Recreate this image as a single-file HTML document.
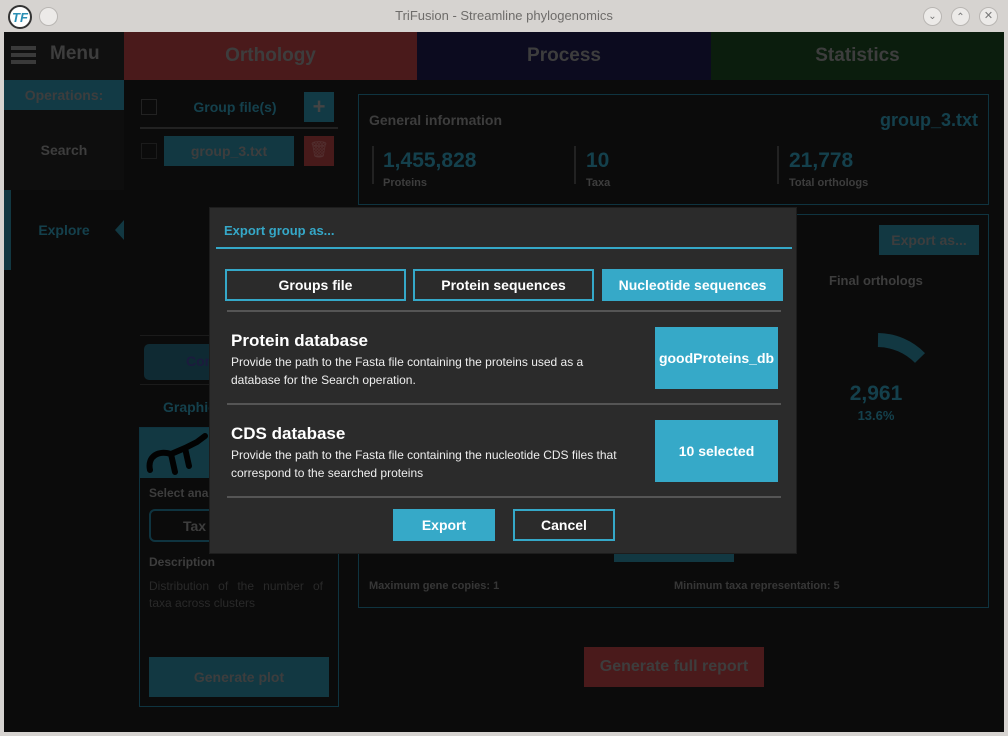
<!DOCTYPE html>
<html><head><meta charset="utf-8"><style>
*{box-sizing:border-box;margin:0;padding:0}
body{width:1008px;height:736px;overflow:hidden;background:#d6d3d0;font-family:"Liberation Sans",sans-serif;position:relative}
.a{position:absolute}
.t{color:#999;font-weight:bold}
.dt{color:#33a0bd;font-weight:bold}
.btn{position:absolute;border:2px solid #35a8c8;color:#fff;font-weight:bold;font-size:14px;display:flex;align-items:center;justify-content:center;background:#2b2b2b}
.fill{background:#36a9c8;border:none}
</style></head><body>
<!-- title bar -->
<div class="a" style="left:8px;top:5px;width:24px;height:24px;border-radius:50%;background:#fff;border:2px solid #333;font:bold italic 13px 'Liberation Sans';color:#2a8fb5;display:flex;align-items:center;justify-content:center">TF</div>
<div class="a" style="left:39px;top:7px;width:19px;height:19px;border-radius:50%;background:#eceae8;border:1px solid #b9b6b3"></div>
<div class="a" style="left:0;top:8px;width:1008px;text-align:center;font-size:13px;color:#6e6c6a">TriFusion - Streamline phylogenomics</div>
<div class="a" style="left:923px;top:7px;width:19px;height:19px;border-radius:50%;background:#eceae8;border:1px solid #b9b6b3;font-size:10px;color:#777;text-align:center;line-height:17px">&#8964;</div>
<div class="a" style="left:951px;top:7px;width:19px;height:19px;border-radius:50%;background:#eceae8;border:1px solid #b9b6b3;font-size:10px;color:#777;text-align:center;line-height:20px">&#8963;</div>
<div class="a" style="left:979px;top:7px;width:19px;height:19px;border-radius:50%;background:#eceae8;border:1px solid #b9b6b3;font-size:11px;color:#777;text-align:center;line-height:17px">&#10005;</div>
<!-- app -->
<div class="a" style="left:4px;top:32px;width:1000px;height:700px;background:#1c1c1c"></div>
<div class="a" style="left:4px;top:32px;width:120px;height:48px;background:#282828"></div>
<div class="a" style="left:11px;top:46px;width:25px;height:4px;background:#929292;box-shadow:0 7px 0 #929292,0 14px 0 #929292"></div>
<div class="a t" style="left:50px;top:43px;font-size:19px">Menu</div>
<div class="a" style="left:124px;top:32px;width:293px;height:48px;background:#b94144"></div>
<div class="a t" style="left:124px;top:45px;width:293px;text-align:center;font-size:19px">Orthology</div>
<div class="a" style="left:417px;top:32px;width:294px;height:48px;background:#1e1c4e"></div>
<div class="a t" style="left:417px;top:45px;width:294px;text-align:center;font-size:19px">Process</div>
<div class="a" style="left:711px;top:32px;width:293px;height:48px;background:#1c4a21"></div>
<div class="a t" style="left:711px;top:45px;width:293px;text-align:center;font-size:19px">Statistics</div>
<div class="a" style="left:4px;top:80px;width:120px;height:30px;background:#2f91ad"></div>
<div class="a t" style="left:4px;top:87px;width:120px;text-align:center;font-size:14px">Operations:</div>
<div class="a" style="left:4px;top:110px;width:120px;height:80px;background:#232323"></div>
<div class="a t" style="left:4px;top:142px;width:120px;text-align:center;font-size:14px">Search</div>
<div class="a" style="left:4px;top:190px;width:7px;height:80px;background:#2e8ca6"></div>
<div class="a dt" style="left:4px;top:222px;width:120px;text-align:center;font-size:14px">Explore</div>
<div class="a" style="left:115px;top:220px;border-right:9px solid #2e8ca6;border-top:10px solid transparent;border-bottom:10px solid transparent"></div>
<!-- left column -->
<div class="a" style="left:141px;top:99px;width:16px;height:16px;border:1px solid #555"></div>
<div class="a dt" style="left:180px;top:99px;width:110px;text-align:center;font-size:14px">Group file(s)</div>
<div class="a" style="left:304px;top:92px;width:30px;height:30px;background:#2f91ad;color:#aaa;font:bold 22px 'Liberation Sans';text-align:center;line-height:29px">+</div>
<div class="a" style="left:140px;top:127px;width:198px;height:2px;background:#555"></div>
<div class="a" style="left:141px;top:143px;width:16px;height:16px;border:1px solid #444"></div>
<div class="a" style="left:164px;top:136px;width:130px;height:30px;background:#2e8ca6;color:#999;font-weight:bold;font-size:14px;text-align:center;line-height:30px">group_3.txt</div>
<div class="a" style="left:304px;top:136px;width:30px;height:30px;background:#b24142;color:#c77;text-align:center;line-height:30px">&#128465;</div>
<div class="a" style="left:140px;top:335px;width:198px;height:1px;background:#444"></div>
<div class="a" style="left:144px;top:344px;width:80px;height:36px;border-radius:5px;background:#266a80"></div>
<div class="a t" style="left:186px;top:353px;font-size:14px;color:#449">Con</div>
<div class="a" style="left:140px;top:384px;width:198px;height:1px;background:#444"></div>
<div class="a dt" style="left:163px;top:399px;font-size:14px">Graphic</div>
<div class="a" style="left:139px;top:427px;width:200px;height:280px;border:1px solid #2683a0"></div>
<div class="a" style="left:140px;top:428px;width:198px;height:50px;background:#2e8ca6"></div>
<svg class="a" style="left:145px;top:432px" width="70" height="44"><path d="M5 38 C2 24 14 18 26 22 L40 16 L52 10 L60 4 M40 16 L44 34 M26 22 L30 40" stroke="#050505" stroke-width="6" fill="none" stroke-linecap="round"/></svg>
<div class="a t" style="left:149px;top:486px;font-size:12px">Select ana</div>
<div class="a" style="left:149px;top:509px;width:80px;height:33px;border:2px solid #2683a0;border-radius:6px"></div>
<div class="a t" style="left:183px;top:518px;font-size:14px">Tax</div>
<div class="a t" style="left:149px;top:555px;font-size:12px">Description</div>
<div class="a" style="left:149px;top:578px;width:174px;font-size:12px;color:#666;line-height:17px;text-align:justify">Distribution of the number of taxa across clusters</div>
<div class="a" style="left:149px;top:657px;width:180px;height:40px;background:#2e8ca6;color:#999;font-weight:bold;font-size:14px;text-align:center;line-height:40px">Generate plot</div>
<!-- right -->
<div class="a" style="left:358px;top:94px;width:631px;height:111px;border:1px solid #2683a0"></div>
<div class="a t" style="left:369px;top:112px;font-size:14px">General information</div>
<div class="a dt" style="left:850px;top:110px;width:128px;text-align:right;font-size:18px">group_3.txt</div>
<div class="a" style="left:372px;top:146px;width:2px;height:38px;background:#555"></div>
<div class="a dt" style="left:383px;top:149px;font-size:21px">1,455,828</div>
<div class="a t" style="left:383px;top:177px;font-size:11px">Proteins</div>
<div class="a" style="left:574px;top:146px;width:2px;height:38px;background:#555"></div>
<div class="a dt" style="left:586px;top:149px;font-size:21px">10</div>
<div class="a t" style="left:586px;top:177px;font-size:11px">Taxa</div>
<div class="a" style="left:777px;top:146px;width:2px;height:38px;background:#555"></div>
<div class="a dt" style="left:789px;top:149px;font-size:21px">21,778</div>
<div class="a t" style="left:789px;top:177px;font-size:11px">Total orthologs</div>
<div class="a" style="left:358px;top:214px;width:631px;height:394px;border:1px solid #2683a0"></div>
<div class="a" style="left:879px;top:225px;width:100px;height:30px;background:#2e8ca6;color:#999;font-weight:bold;font-size:14px;text-align:center;line-height:30px">Export as...</div>
<div class="a t" style="left:829px;top:273px;font-size:13px">Final orthologs</div>
<svg class="a" style="left:870px;top:330px" width="70" height="45"><path d="M8 10 A60 60 0 0 1 50 28" stroke="#2e8ca6" stroke-width="14" fill="none"/></svg>
<div class="a dt" style="left:826px;top:382px;width:100px;text-align:center;font-size:21px">2,961</div>
<div class="a dt" style="left:826px;top:408px;width:100px;text-align:center;font-size:13px">13.6%</div>
<div class="a" style="left:614px;top:540px;width:120px;height:22px;background:#2e8ca6"></div>
<div class="a t" style="left:369px;top:580px;font-size:11px;color:#888">Maximum gene copies: 1</div>
<div class="a t" style="left:674px;top:580px;font-size:11px;color:#888">Minimum taxa representation: 5</div>
<div class="a" style="left:584px;top:647px;width:180px;height:40px;background:#b94144;color:#999;font-weight:bold;font-size:16px;text-align:center;line-height:40px">Generate full report</div>
<!-- backdrop -->
<div class="a" style="left:4px;top:32px;width:1000px;height:700px;background:rgba(0,0,0,0.6)"></div>
<!-- dialog -->
<div class="a" style="left:209px;top:207px;width:588px;height:347px;background:#2b2b2b;border:1px solid #1d1d1d"></div>
<div class="a" style="left:224px;top:223px;font-size:13px;font-weight:bold;color:#35a8c8">Export group as...</div>
<div class="a" style="left:216px;top:247px;width:576px;height:2px;background:#35a8c8"></div>
<div class="btn" style="left:225px;top:269px;width:181px;height:32px">Groups file</div>
<div class="btn" style="left:413px;top:269px;width:181px;height:32px">Protein sequences</div>
<div class="btn fill" style="left:602px;top:269px;width:181px;height:32px">Nucleotide sequences</div>
<div class="a" style="left:227px;top:310px;width:554px;height:2px;background:#555"></div>
<div class="a" style="left:231px;top:331px;font-size:17px;font-weight:bold;color:#fff">Protein database</div>
<div class="a" style="left:231px;top:353px;width:395px;font-size:12px;line-height:18px;color:#eee">Provide the path to the Fasta file containing the proteins used as a database for the Search operation.</div>
<div class="btn fill" style="left:655px;top:327px;width:123px;height:62px">goodProteins_db</div>
<div class="a" style="left:227px;top:403px;width:554px;height:2px;background:#555"></div>
<div class="a" style="left:231px;top:424px;font-size:17px;font-weight:bold;color:#fff">CDS database</div>
<div class="a" style="left:231px;top:446px;width:420px;font-size:12px;line-height:18px;color:#eee">Provide the path to the Fasta file containing the nucleotide CDS files that correspond to the searched proteins</div>
<div class="btn fill" style="left:655px;top:420px;width:123px;height:62px">10 selected</div>
<div class="a" style="left:227px;top:496px;width:554px;height:2px;background:#555"></div>
<div class="btn fill" style="left:393px;top:509px;width:102px;height:32px">Export</div>
<div class="btn" style="left:513px;top:509px;width:102px;height:32px">Cancel</div>
</body></html>
